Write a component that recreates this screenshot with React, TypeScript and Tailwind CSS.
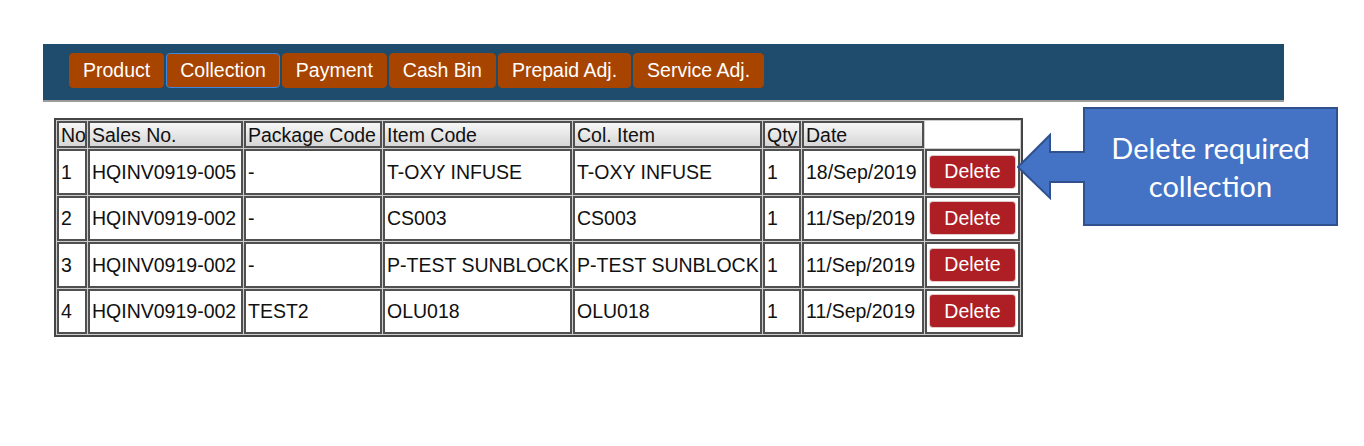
import React from 'react'

const tabs = ['Product', 'Collection', 'Payment', 'Cash Bin', 'Prepaid Adj.', 'Service Adj.']

const rows = [
  { no: 1, sales: 'HQINV0919-005', pkg: '-', item: 'T-OXY INFUSE', col: 'T-OXY INFUSE', qty: 1, date: '18/Sep/2019' },
  { no: 2, sales: 'HQINV0919-002', pkg: '-', item: 'CS003', col: 'CS003', qty: 1, date: '11/Sep/2019' },
  { no: 3, sales: 'HQINV0919-002', pkg: '-', item: 'P-TEST SUNBLOCK', col: 'P-TEST SUNBLOCK', qty: 1, date: '11/Sep/2019' },
  { no: 4, sales: 'HQINV0919-002', pkg: 'TEST2', item: 'OLU018', col: 'OLU018', qty: 1, date: '11/Sep/2019' },
]

const th = 'h-[27px] border-2 border-[#505050] bg-gradient-to-b from-[#f7f7f7] to-[#d6d6d6] pl-[2px] text-left font-normal whitespace-nowrap'
const td = 'h-[45.5px] border-2 border-[#505050] bg-white pl-[2px] text-left whitespace-nowrap'

const App = () => {
  return (
    <div className="relative w-[1364px] h-[446px] bg-white pt-[44px] pl-[43px] text-[19.5px] text-[#111] font-['Liberation_Sans',Arial,sans-serif]">
      {/* tab bar */}
      <div className="w-[1241px] h-[58px] bg-[#1f4b6c] border-b-2 border-[#9b9b9b] flex items-start gap-[2px] pt-[9px] pl-[26px]">
        {tabs.map((t) => (
          <button
            key={t}
            className={
              t === 'Collection'
                ? 'h-[35px] px-[13px] rounded-[4px] bg-[#a64400] text-white border border-[#3f86dc] leading-none'
                : 'h-[35px] px-[13px] rounded-[4px] bg-[#a64400] text-white border border-[#a64400] leading-none'
            }
          >
            {t}
          </button>
        ))}
      </div>

      {/* collection table */}
      <table className="mt-[16px] ml-[11px] table-fixed w-[969px] border-separate border-spacing-[1px] border-2 border-[#454545] bg-[#cdcdcd] leading-[22px]">
        <thead>
          <tr>
            <th className={th + ' w-[30px]'}>No</th>
            <th className={th + ' w-[155px]'}>Sales No.</th>
            <th className={th + ' w-[138px]'}>Package Code</th>
            <th className={th + ' w-[189px]'}>Item Code</th>
            <th className={th + ' w-[189px]'}>Col. Item</th>
            <th className={th + ' w-[38px]'}>Qty</th>
            <th className={th + ' w-[122px]'}>Date</th>
            <th className="h-[27px] w-[95px] bg-white border-2 border-white"></th>
          </tr>
        </thead>
        <tbody>
          {rows.map((r) => (
            <tr key={r.no}>
              <td className={td}>{r.no}</td>
              <td className={td}>{r.sales}</td>
              <td className={td}>{r.pkg}</td>
              <td className={td}>{r.item}</td>
              <td className={td}>{r.col}</td>
              <td className={td}>{r.qty}</td>
              <td className={td}>{r.date}</td>
              <td className="h-[45.5px] border-2 border-[#505050] bg-white text-center">
                <button className="w-[85px] h-[32px] rounded-[3px] bg-[#ad1f25] text-white leading-none shadow-[0_0_0_1px_#e3caca]">
                  Delete
                </button>
              </td>
            </tr>
          ))}
        </tbody>
      </table>

      {/* callout annotation */}
      <div className="absolute left-[1017px] top-[107px] w-[322px] h-[120px]">
        <svg width="322" height="120" viewBox="0 0 322 120">
          <path
            d="M67 1 H320 V118 H67 V75 H33 V91 L1 60 L33 28 V45 H67 Z"
            fill="#4472c4"
            stroke="#2f528f"
            strokeWidth="2"
            strokeLinejoin="miter"
          />
        </svg>
        <div className="absolute left-[67px] top-[1px] w-[253px] h-[117px] flex items-center justify-center text-center text-white text-[29px] leading-[38px] font-['Lato','Noto_Sans',sans-serif]">
          Delete required
          <br />
          collection
        </div>
      </div>
    </div>
  )
}

export default App
